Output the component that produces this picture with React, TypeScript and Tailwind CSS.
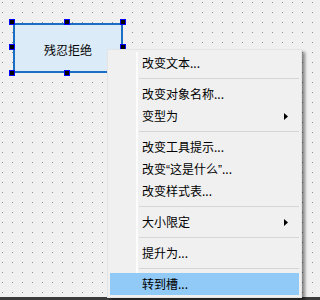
import React from "react";

type Item = { type: "item"; label: React.ReactNode; arrow?: boolean; active?: boolean } | { type: "sep" };

const q = (s: string) => (
  <span style={{ fontFamily: '"Liberation Sans", sans-serif' }}>{s}</span>
);

const items: Item[] = [
  { type: "item", label: "改变文本..." },
  { type: "sep" },
  { type: "item", label: "改变对象名称..." },
  { type: "item", label: "变型为", arrow: true },
  { type: "sep" },
  { type: "item", label: "改变工具提示..." },
  { type: "item", label: <>改变{q("\u201C")}这是什么{q("\u201D")}...</> },
  { type: "item", label: "改变样式表..." },
  { type: "sep" },
  { type: "item", label: "大小限定", arrow: true },
  { type: "sep" },
  { type: "item", label: "提升为..." },
  { type: "sep" },
  { type: "item", label: "转到槽...", active: true },
];

const handles: [number, number][] = [
  [12, 22], [67, 22], [123, 22],
  [12, 47], [123, 47],
  [12, 73], [67, 73], [123, 73],
];

export default function App() {
  return (
    <div
      className="relative w-[320px] h-[300px] overflow-hidden bg-[#f0f0f0]"
      style={{ fontFamily: '"Noto Sans CJK SC", "Noto Sans", sans-serif' }}
    >
      <svg className="absolute inset-0" width="320" height="300">
        <defs>
          <pattern id="dots" width="10" height="10" patternUnits="userSpaceOnUse">
            <rect x="2" y="2" width="1" height="1" fill="#8c8c8c" />
          </pattern>
        </defs>
        <rect width="320" height="300" fill="url(#dots)" />
      </svg>

      {/* bottom window edge */}
      <div className="absolute left-0 bottom-0 w-full h-[3px] bg-[#3a3a3a]" />

      {/* selected widget */}
      <div className="absolute left-[13px] top-[23px] w-[110px] h-[50px] border-2 border-[#1a6fc4] bg-[#dcebf8] flex items-center justify-center text-[12px] text-black">
        <span className="mt-[3px]">残忍拒绝</span>
      </div>
      {handles.map(([x, y], i) => (
        <div
          key={i}
          className="absolute w-[6px] h-[6px] bg-black border border-[#0000ff]"
          style={{ left: x - 3, top: y - 3 }}
        />
      ))}

      {/* context menu */}
      <div className="absolute left-[107px] top-[49px] w-[195px] border border-[#e4e4e4] bg-[#f0f0f0] px-[2px] pt-[2px] pb-[2px] shadow-[3px_3px_3px_rgba(0,0,0,0.45)]">
        <div className="relative flex flex-col">
          <div className="absolute left-[26px] top-0 bottom-0 w-[2px] bg-[#fcfcfc]" />
          {items.map((it, i) =>
            it.type === "sep" ? (
              <div key={i} className="relative h-[9px] flex items-center pl-[29px]">
                <div className="h-px w-full bg-[#d5d5d5]" />
              </div>
            ) : (
              <div
                key={i}
                className={
                  "relative h-[22px] flex items-center pl-[32px] pr-[11px] text-[12px] text-black " +
                  (it.active ? "bg-[#91c9f7]" : "")
                }
              >
                <span className="flex-1 leading-none">{it.label}</span>
                {it.arrow && (
                  <svg width="4" height="7" viewBox="0 0 4 7">
                    <polygon points="0,0 4,3.5 0,7" fill="#000" />
                  </svg>
                )}
              </div>
            )
          )}
        </div>
      </div>
    </div>
  );
}
